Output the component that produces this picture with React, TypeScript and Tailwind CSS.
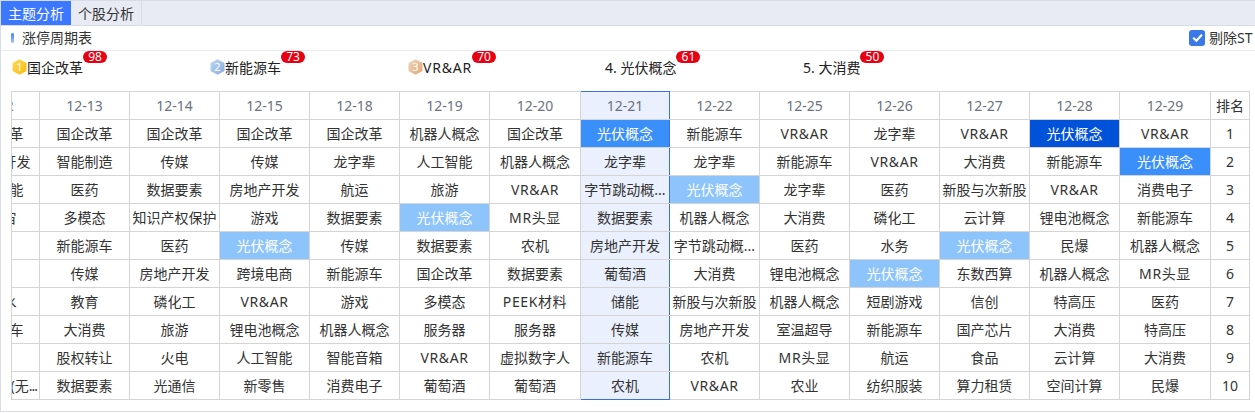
const F = '[font-family:"Noto_Sans","Noto_Sans_CJK_SC",sans-serif]';

const dates = ['12-12','12-13','12-14','12-15','12-18','12-19','12-20','12-21','12-22','12-25','12-26','12-27','12-28','12-29'];
const rows: string[][] = [
  ['国企改革','国企改革','国企改革','国企改革','国企改革','机器人概念','国企改革','光伏概念','新能源车','VR&AR','龙字辈','VR&AR','光伏概念','VR&AR'],
  ['房地产开发','智能制造','传媒','传媒','龙字辈','人工智能','机器人概念','龙字辈','龙字辈','新能源车','VR&AR','大消费','新能源车','光伏概念'],
  ['人工智能','医药','数据要素','房地产开发','航运','旅游','VR&AR','字节跳动概...','光伏概念','龙字辈','医药','新股与次新股','VR&AR','消费电子'],
  ['元宇宙','多模态','知识产权保护','游戏','数据要素','光伏概念','MR头显','数据要素','机器人概念','大消费','磷化工','云计算','锂电池概念','新能源车'],
  ['','新能源车','医药','光伏概念','传媒','数据要素','农机','房地产开发','字节跳动概...','医药','水务','光伏概念','民爆','机器人概念'],
  ['','传媒','房地产开发','跨境电商','新能源车','国企改革','数据要素','葡萄酒','大消费','锂电池概念','光伏概念','东数西算','机器人概念','MR头显'],
  ['饮用水','教育','磷化工','VR&AR','游戏','多模态','PEEK材料','储能','新股与次新股','机器人概念','短剧游戏','信创','特高压','医药'],
  ['新能源车','大消费','旅游','锂电池概念','机器人概念','服务器','服务器','传媒','房地产开发','室温超导','新能源车','国产芯片','大消费','特高压'],
  ['','股权转让','火电','人工智能','智能音箱','VR&AR','虚拟数字人','新能源车','农机','MR头显','航运','食品','云计算','大消费'],
  ['华为概念(无...','数据要素','光通信','新零售','消费电子','葡萄酒','葡萄酒','农机','VR&AR','农业','纺织服装','算力租赁','空间计算','民爆'],
];
const widths = [88,90,90,90,90,90,91,89,90,90,90,90,90,91,39];

function cellClass(r: number, c: number) {
  const v = rows[r][c];
  if (v === '光伏概念') {
    if (c === 12) return 'bg-[#0052d9] text-white';
    if (c === 7 || c === 13) return 'bg-[#3a8ffb] text-white';
    return 'bg-[#8cc4fb] text-white';
  }
  if (c === 7) return 'bg-[#eaf0fd] text-[#333333]';
  return 'text-[#333333]';
}

function Hex({ n, a, b }: { n: number; a: string; b: string }) {
  const id = 'h' + n;
  return (
    <svg width="15" height="16" viewBox="0 0 15 16" className="shrink-0">
      <defs>
        <linearGradient id={id} x1="0" y1="0" x2="1" y2="1">
          <stop offset="0" stopColor={a} />
          <stop offset="1" stopColor={b} />
        </linearGradient>
      </defs>
      <path d="M7.5 0.8 L14 4.2 V11.8 L7.5 15.2 L1 11.8 V4.2 Z" fill={`url(#${id})`} stroke={`url(#${id})`} strokeLinejoin="round" />
      <text x="7.5" y="12" textAnchor="middle" fontSize="11" fill="#ffffff" fontFamily="Noto Sans">{n}</text>
    </svg>
  );
}

function Badge({ v }: { v: number }) {
  return <span className="absolute left-full -top-[6px] w-[24px] h-[12px] rounded-full bg-[#e60012] text-white text-[12px] leading-[12px] text-center tracking-normal">{v}</span>;
}

const top = [
  { name: '国企改革', v: 98, icon: <Hex n={1} a="#ffdc55" b="#f8b810" /> },
  { name: '新能源车', v: 73, icon: <Hex n={2} a="#bcd6f2" b="#86ace0" /> },
  { name: 'VR&AR', v: 70, icon: <Hex n={3} a="#f2d4b4" b="#dfa878" />, wide: true },
  { name: '4. 光伏概念', v: 61 },
  { name: '5. 大消费', v: 50 },
];

function Cell({ v }: { v: string }) {
  if (v.endsWith('(无...')) {
    return <>{v.slice(0, -3)}<span className="tracking-[-1px]">...</span></>;
  }
  return <>{v}</>;
}

export default function App() {
  return (
    <div className={`w-[1255px] h-[414px] overflow-hidden bg-white ${F} text-[#333333]`}>
      <div className="h-[412px] border-l border-b border-t border-[#d8dbe8] flex flex-col">
        <div className="h-[24px] shrink-0 bg-[#e8ebf4] border-b border-[#d8dbe8] flex text-[14px] box-content">
          <div className="w-[70px] bg-[#3b78ff] text-white flex items-center justify-center">主题分析</div>
          <div className="w-[71px] border-r border-[#d8dbe8] flex items-center justify-center">个股分析</div>
        </div>
        <div className="h-[25px] shrink-0 border-b border-[#e8ebf4] flex items-center pl-[10px] pb-[1px] text-[14px]">
          <span className="w-[3px] h-[10px] rounded-sm bg-gradient-to-b from-[#3b78ff] to-[#a8c4ff]" />
          <span className="ml-[8px]">涨停周期表</span>
          <span className="ml-auto w-[16px] h-[16px] rounded-[3px] bg-[#3b78e8] flex items-center justify-center">
            <svg width="13" height="13" viewBox="0 0 12 12"><path d="M2 6.2 L5 9 L10 3.4" fill="none" stroke="#fff" strokeWidth="2" /></svg>
          </span>
          <span className="ml-[4px] w-[46px] whitespace-nowrap">剔除ST</span>
        </div>
        <div className="h-[40px] shrink-0 flex pl-[11px] pt-[6px] text-[14px] text-[#222222]">
          {top.map((t, i) => (
            <div key={i} className="w-[198px] h-[20px] flex items-center">
              {t.icon ?? null}
              <span className={`relative whitespace-nowrap ${t.icon ? '' : '-ml-[1px]'} ${t.wide ? 'tracking-[0.8px]' : ''}`}>{t.name}<Badge v={t.v} /></span>
            </div>
          ))}
        </div>
        <div className="ml-[10px] w-[1239px] overflow-hidden border-l border-[#d4d4d4]">
          <table className="-ml-[61px] table-fixed border-collapse text-[14px]" style={{ width: 1299 }}>
            <colgroup>
              {widths.map((w, i) => <col key={i} style={{ width: w }} />)}
            </colgroup>
            <thead>
              <tr className="h-[28px]">
                {dates.map((d, c) => (
                  <th key={d} className={`border border-[#d4d4d4] p-0 font-normal text-[14px] text-[#6b7280] ${c === 7 ? 'bg-[#eaf0fd] border-x-[#3b6fe0] border-t-[#3b6fe0]' : ''}`}>{d}</th>
                ))}
                <th className="border border-[#d4d4d4] p-0 font-normal text-[14px] text-[#333333]">排名</th>
              </tr>
            </thead>
            <tbody>
              {rows.map((row, r) => (
                <tr key={r} className="h-[28px]">
                  {row.map((v, c) => (
                    <td key={c} className={`border border-[#d4d4d4] p-0 whitespace-nowrap overflow-hidden ${c === 0 && r === 9 ? 'text-right pr-[2px]' : 'text-center'} ${/[A-Z]/.test(v) ? 'tracking-[0.6px]' : ''} ${c === 7 ? 'border-x-[#3b6fe0]' : ''} ${c === 7 && r === 9 ? 'border-b-[#3b6fe0]' : ''} ${cellClass(r, c)}`}><Cell v={v} /></td>
                  ))}
                  <td className="border border-[#d4d4d4] p-0 text-center text-[14px]">{r + 1}</td>
                </tr>
              ))}
            </tbody>
          </table>
        </div>
      </div>
    </div>
  );
}
